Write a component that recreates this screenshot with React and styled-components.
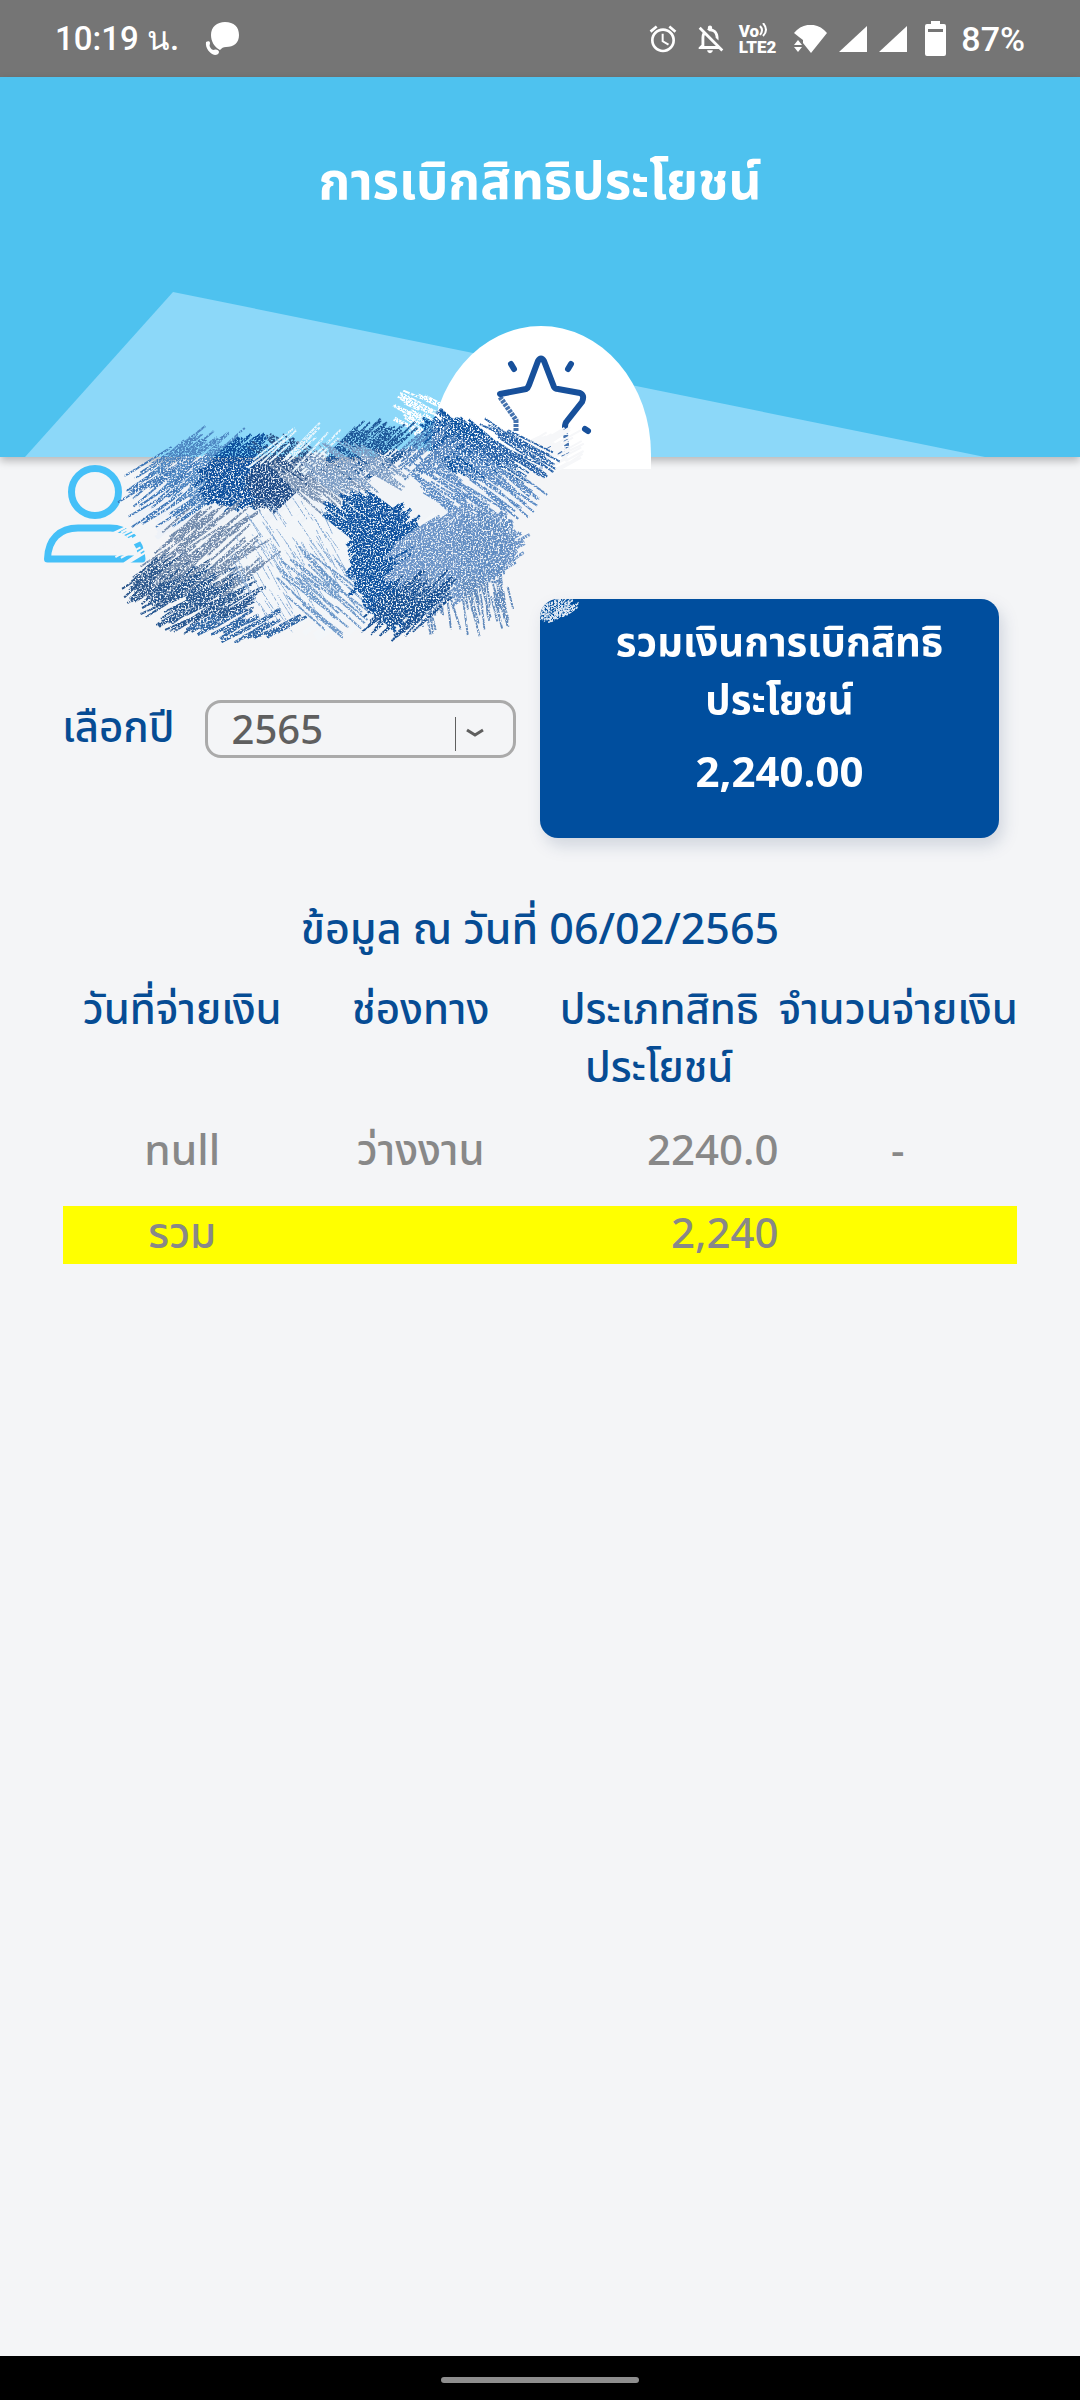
import React, { useState } from "react";
import styled, { createGlobalStyle, ThemeProvider } from "styled-components";
import { MdAlarm, MdOutlineNotificationsOff } from "react-icons/md";

const theme = {
  color: {
    page: "#f4f5f7",
    sky: "#4ec2ef",
    skyLight: "#8cd8f9",
    icon: "#45c0f8",
    blue: "#064c94",
    card: "#004e9e",
    gray: "#888888",
    border: "#aaaaaa",
    yellow: "#ffff00",
  },
  font: {
    text: `"Noto Sans Thai", "Noto Sans", sans-serif`,
    input: `"Noto Sans", sans-serif`,
    status: `Roboto, "Noto Sans", sans-serif`,
  },
};

const GlobalStyle = createGlobalStyle`
  * {
    box-sizing: border-box;
  }
  body {
    margin: 0;
    background: #f4f5f7;
  }
`;
const Screen = styled.div`
  display: flex;
  flex-direction: column;
  min-height: 100vh;
  background: ${({ theme }) => theme.color.page};
  font-family: ${({ theme }) => theme.font.text};
  font-size: 42px;
  line-height: 58px;
  font-weight: 500;
`;

/* status bar */
const StatusBar = styled.div`
  display: flex;
  align-items: center;
  justify-content: space-between;
  height: 77px;
  padding: 0 55px;
  background: #757575;
  color: #fff;
  font-family: ${({ theme }) => theme.font.status};
  font-size: 34px;
  line-height: 40px;
`;
const Clock = styled.span`
  font-size: 33px;
`;
const StatusGroup = styled.div`
  display: flex;
  align-items: center;
  gap: ${({ $gap }) => $gap}px;
  svg {
    display: block;
    fill: currentColor;
  }
`;
const Volte = styled.div`
  font-size: 17px;
  line-height: 16px;
  font-weight: 900;
`;
const VolteTop = styled.div`
  display: flex;
  svg {
    fill: none;
    stroke: currentColor;
    stroke-width: 2;
  }
`;

/* header */
const Header = styled.header`
  position: relative;
  height: 380px;
  background: ${({ theme }) => theme.color.sky};
  box-shadow: 0 4px 8px rgba(0, 0, 0, 0.25);
`;
const Title = styled.h1`
  margin: 0;
  padding-top: 75px;
  color: #fff;
  font-size: 51px;
  line-height: 64px;
  font-weight: 700;
  text-align: center;
`;
const Beam = styled.svg`
  position: absolute;
  left: 0;
  bottom: 0;
  width: 100%;
  height: 165px;
  fill: ${({ theme }) => theme.color.skyLight};
`;
const Badge = styled.div`
  position: absolute;
  left: 50%;
  bottom: -12px;
  width: 220px;
  height: 143px;
  margin-left: -109px;
  border-radius: 110px 110px 0 0 / 128px 128px 0 0;
  background: #fff;
  svg {
    display: block;
  }
`;

/* profile */
const Profile = styled.section`
  position: relative;
  height: 142px;
  padding: 8px 0 0 44px;
`;
const ScribbleArt = styled.svg`
  position: absolute;
  left: ${({ $left }) => $left}px;
  top: ${({ $top }) => $top}px;
  pointer-events: none;
`;

/* year and total */
const Summary = styled.section`
  display: grid;
  grid-template-columns: 1fr 1fr;
`;
const YearField = styled.div`
  display: flex;
  align-items: center;
  gap: 30px;
  padding: 20px 24px 0 62px;
`;
const YearLabel = styled.label`
  color: ${({ theme }) => theme.color.blue};
  white-space: nowrap;
`;
const SelectBox = styled.div`
  position: relative;
  flex: 1;
  svg {
    position: absolute;
    right: 32px;
    top: 16px;
    pointer-events: none;
  }
`;
const YearSelect = styled.select`
  display: block;
  appearance: none;
  width: 100%;
  height: 58px;
  padding: 0 0 0 24px;
  border: 3px solid ${({ theme }) => theme.color.border};
  border-radius: 16px;
  background: transparent;
  color: #5f5f5f;
  font-family: ${({ theme }) => theme.font.input};
  font-size: 40px;
  font-weight: 500;
  line-height: 52px;
  outline: none;
`;
const TotalCard = styled.div`
  position: relative;
  overflow: hidden;
  width: 85%;
  height: 239px;
  padding: 16px 0 0 20px;
  border-radius: 18px;
  background: ${({ theme }) => theme.color.card};
  color: #fff;
  font-weight: 700;
  text-align: center;
`;
const CardShadow = styled.div`
  filter: drop-shadow(4px 8px 8px rgba(0, 30, 80, 0.14));
`;
const TotalTitle = styled.h2`
  margin: 0 0 14px;
  font-size: 40px;
  line-height: 58px;
`;

/* table */
const Benefits = styled.section`
  flex: 1;
  padding: 64px 63px 0;
`;
const AsOf = styled.p`
  margin: 0 0 22px;
  color: ${({ theme }) => theme.color.blue};
  font-size: 43px;
  text-align: center;
`;
const Table = styled.table`
  width: 100%;
  table-layout: fixed;
  border-collapse: collapse;
  color: ${({ theme }) => theme.color.gray};
  th,
  td {
    padding: 0;
    font-weight: 500;
    text-align: center;
    vertical-align: top;
    white-space: nowrap;
  }
  thead {
    color: ${({ theme }) => theme.color.blue};
  }
  tbody td {
    padding: 25px 0;
  }
  td:nth-child(3) {
    text-align: right;
  }
`;
const SumRow = styled.tr`
  background: ${({ theme }) => theme.color.yellow};
`;

const NavBar = styled.nav`
  display: flex;
  justify-content: center;
  align-items: center;
  height: 44px;
  padding-top: 4px;
  background: #000;
`;
const Handle = styled.span`
  width: 198px;
  height: 6px;
  border-radius: 3px;
  background: #8e8e8e;
`;

/* small seeded generator, so the strokes stay put between renders */
const random = seed => () => {
  seed = (seed * 1664525 + 1013904223) % 4294967296;
  return seed / 4294967296;
};

// x, y: centre, w, h: spread, a: stroke angle, n: count, l: length, s: width
const basePatches = [
  { x: 185, y: 495, w: 70, h: 56, a: -38, n: 90, l: 46, s: 4, c: "#eef2f8" },
  { x: 290, y: 500, w: 190, h: 60, a: -38, n: 300, l: 50, s: 5, c: "#eff3f8" },
  { x: 425, y: 495, w: 150, h: 70, a: 34, n: 260, l: 50, s: 5, c: "#f1f4f8" },
  { x: 320, y: 570, w: 300, h: 110, a: -38, n: 260, l: 50, s: 5, c: "#f3f6f9" },
  { x: 548, y: 452, w: 60, h: 36, a: -30, n: 60, l: 30, s: 2, c: "#f6f7f9" },
  { x: 130, y: 540, w: 40, h: 40, a: -30, n: 30, l: 22, s: 2, c: "#f4f5f7" },
];
const inkPatches = [
  { x: 425, y: 416, w: 46, h: 50, a: 28, n: 60, l: 26, s: 2, c: "#ffffff" },
  { x: 175, y: 485, w: 80, h: 70, a: -36, n: 60, l: 48, s: 2, c: "#3f78b8" },
  { x: 205, y: 462, w: 80, h: 46, a: -42, n: 45, l: 50, s: 2, c: "#4d86c2" },
  { x: 242, y: 472, w: 70, h: 54, a: -40, n: 170, l: 38, s: 3, c: "#0d509d" },
  { x: 230, y: 488, w: 46, h: 36, a: 38, n: 50, l: 30, s: 3, c: "#0d509d" },
  { x: 280, y: 476, w: 46, h: 50, a: -42, n: 170, l: 34, s: 3, c: "#1d4a86" },
  { x: 292, y: 460, w: 60, h: 34, a: 35, n: 50, l: 38, s: 2, c: "#2a5288" },
  { x: 318, y: 478, w: 60, h: 50, a: 38, n: 40, l: 44, s: 2, c: "#7a93b4" },
  { x: 300, y: 450, w: 90, h: 20, a: -42, n: 14, l: 46, s: 2, c: "#e8f6fd" },
  { x: 372, y: 448, w: 70, h: 36, a: -40, n: 70, l: 48, s: 2, c: "#1f5798" },
  { x: 350, y: 470, w: 90, h: 40, a: 36, n: 40, l: 44, s: 2, c: "#7b9cc4" },
  { x: 462, y: 446, w: 56, h: 44, a: 40, n: 160, l: 42, s: 3, c: "#0c52a0" },
  { x: 508, y: 452, w: 60, h: 36, a: 30, n: 50, l: 54, s: 2, c: "#2561a8" },
  { x: 430, y: 452, w: 50, h: 40, a: -40, n: 40, l: 40, s: 2, c: "#5484bd" },
  { x: 475, y: 486, w: 110, h: 56, a: 36, n: 70, l: 48, s: 2, c: "#5a8ac4" },
  { x: 165, y: 578, w: 56, h: 36, a: -38, n: 70, l: 44, s: 2, c: "#2b568c" },
  { x: 200, y: 600, w: 90, h: 48, a: -30, n: 100, l: 46, s: 2, c: "#265690" },
  { x: 215, y: 548, w: 110, h: 80, a: -38, n: 70, l: 48, s: 2, c: "#7089ab" },
  { x: 245, y: 625, w: 100, h: 20, a: -28, n: 30, l: 34, s: 3, c: "#2f66a6" },
  { x: 290, y: 565, w: 110, h: 120, a: 60, n: 90, l: 26, s: 1, c: "#86aad4" },
  { x: 325, y: 595, w: 80, h: 60, a: 42, n: 36, l: 50, s: 2, c: "#6d98c9" },
  { x: 385, y: 552, w: 56, h: 80, a: -42, n: 170, l: 42, s: 3, c: "#08509f" },
  { x: 368, y: 520, w: 60, h: 40, a: 38, n: 60, l: 44, s: 3, c: "#0b519f" },
  { x: 388, y: 590, w: 46, h: 60, a: 42, n: 120, l: 40, s: 3, c: "#0b519f" },
  { x: 455, y: 555, w: 100, h: 76, a: -32, n: 260, l: 52, s: 3, c: "#6a93c7" },
  { x: 485, y: 542, w: 60, h: 60, a: 84, n: 60, l: 34, s: 2, c: "#5f8bc1" },
  { x: 460, y: 602, w: 110, h: 36, a: 78, n: 50, l: 36, s: 2, c: "#6089bb" },
  { x: 408, y: 606, w: 60, h: 36, a: -44, n: 50, l: 54, s: 2, c: "#174f93" },
];

const cornerPatches = [
  { x: 12, y: 8, w: 44, h: 22, a: -38, n: 60, l: 18, s: 2, c: "#dfe8f3" },
];

const strokesOf = ({ x, y, w, h, a, n, l, s, c }, seed) => {
  const next = random(seed * 7919 + 13);
  let d = "";
  for (let i = 0; i < n; i++) {
    const turn = next() * Math.PI * 2;
    const far = Math.sqrt(next());
    const cx = x + (Math.cos(turn) * far * w) / 2;
    const cy = y + (Math.sin(turn) * far * h) / 2;
    const angle = ((a + (next() - 0.5) * 12) * Math.PI) / 180;
    const half = (l * (0.6 + next() * 0.6)) / 2;
    const dx = Math.cos(angle) * half;
    const dy = Math.sin(angle) * half;
    d += `M${(cx - dx).toFixed(1)} ${(cy - dy).toFixed(1)}L${(cx + dx).toFixed(1)} ${(cy + dy).toFixed(1)}`;
  }
  return <path key={c + seed} d={d} stroke={c} strokeWidth={s} fill="none" />;
};

const Scribble = ({ id, base = [], ink, left, top, viewBox, width, height }) => (
  <ScribbleArt
    $left={left}
    $top={top}
    width={width}
    height={height}
    viewBox={viewBox}
    aria-hidden="true"
  >
    <filter id={id} x="0" y="0" width="100%" height="100%">
      <feTurbulence type="fractalNoise" baseFrequency="0.6" numOctaves="2" seed="4" />
      <feColorMatrix values="0 0 0 0 0  0 0 0 0 0  0 0 0 0 0  0 0 0 5 -1.6" />
      <feComposite in="SourceGraphic" operator="in" />
    </filter>
    <g>{base.map((part, i) => strokesOf(part, i + 50))}</g>
    <g filter={`url(#${id})`}>{ink.map((part, i) => strokesOf(part, i + 1))}</g>
  </ScribbleArt>
);

const ChatIcon = () => (
  <svg width="34" height="34" viewBox="0 0 34 34">
    <path d="M20 0c9 0 14 5 14 13s-5 12-13 12c-3 0-4 1-6 3-6-3-9-9-9-15C6 5 12 0 20 0z" />
    <path d="M1 20c2-1 4-1 4 1 0 2-1 2 0 4 1 2 2 3 4 3 2-1 5 0 5 2s-2 3-4 3C5 32 0 26 1 20z" />
  </svg>
);

const WifiIcon = () => (
  <svg width="33" height="28" viewBox="0 0 33 28">
    <path d="M0 8C9-3 24-3 33 8L17 28 9 18V15L5 12z" />
    <path d="M4 15l4 5H0zM0 22h8l-4 5z" />
  </svg>
);

const SignalIcon = () => (
  <svg width="28" height="26" viewBox="0 0 28 26">
    <path d="M28 0V26H0z" />
  </svg>
);

const BatteryIcon = () => (
  <svg width="21" height="35" viewBox="0 0 21 35">
    <path
      fillRule="evenodd"
      d="M6 0h9v3h4q2 0 2 2v28q0 2-2 2H2q-2 0-2-2V5q0-2 2-2h4zM3 8v3h15V8z"
    />
  </svg>
);

const StarIcon = () => (
  <svg
    width="220"
    height="150"
    viewBox="431 326 220 150"
    fill="none"
    stroke="#17509b"
    strokeWidth="6"
    strokeLinecap="round"
    strokeLinejoin="round"
  >
    <path d="M500 394 526 389Q528 388 529 385L538 361Q541 356 544 361L554 387Q555 389 558 389L580 393Q585 395 582 402L567 421Q565 423 565 427" />
    <path
      d="M500 397 516 420 516 432M565 427L567 450Q567 456 562 454L541 442"
      strokeWidth="5"
      strokeDasharray="3 1"
      strokeLinecap="butt"
      opacity="0.8"
    />
    <path d="M511 364l3 5M571 364l-3 5M585 429l3 2" />
    <path d="M541 465v8" opacity="0.3" strokeWidth="4" />
  </svg>
);

const PersonIcon = () => (
  <svg width="102" height="98" viewBox="0 0 102 98" fill="none" stroke="#45c0f8" strokeWidth="7">
    <circle cx="51" cy="27" r="23.500" />
    <path d="M3.500 94C4 74 16 63 34 63H66C84 63 97 76 98 94z" strokeLinejoin="round" />
  </svg>
);

const rows = [{ date: "null", channel: "ว่างงาน", type: "2240.0", amount: "-" }];

const BenefitScreen = () => {
  const [year, setYear] = useState("2565");

  return (
    <Screen>
      <StatusBar>
        <StatusGroup $gap={26}>
          <Clock>10:19 น.</Clock>
          <ChatIcon />
        </StatusGroup>
        <StatusGroup $gap={18}>
          <StatusGroup $gap={12}>
            <StatusGroup $gap={14}>
              <MdAlarm size={32} />
              <MdOutlineNotificationsOff size={34} />
            </StatusGroup>
            <Volte>
              <VolteTop>
                Vo
                <svg width="10" height="14" viewBox="0 0 10 14">
                  <path d="M1 3q4 4 0 9M4 0q6 7 0 13" />
                </svg>
              </VolteTop>
              LTE2
            </Volte>
          </StatusGroup>
          <StatusGroup $gap={12}>
            <WifiIcon />
            <SignalIcon />
            <SignalIcon />
          </StatusGroup>
          <StatusGroup $gap={15}>
            <BatteryIcon />
            <span>87%</span>
          </StatusGroup>
        </StatusGroup>
      </StatusBar>

      <Header>
        <Beam viewBox="0 0 1080 165" preserveAspectRatio="none">
          <path d="M25 165 173 0 985 165z" />
        </Beam>
        <Title>การเบิกสิทธิประโยชน์</Title>
        <Badge>
          <StarIcon />
        </Badge>
      </Header>

      <Profile>
        <PersonIcon />
        <Scribble
          id="grain"
          base={basePatches}
          ink={inkPatches}
          left={100}
          top={-87}
          width={520}
          height={290}
          viewBox="100 370 520 290"
        />
      </Profile>

      <Summary>
        <YearField>
          <YearLabel htmlFor="year">เลือกปี</YearLabel>
          <SelectBox>
            <YearSelect id="year" value={year} onChange={e => setYear(e.target.value)}>
              <option value="2565">2565</option>
              <option value="2564">2564</option>
            </YearSelect>
            <svg width="30" height="36" viewBox="0 0 30 36" fill="none" stroke="#5f5f5f">
              <path d="M1.500 1V35" />
              <path d="M13 14l8 5 8-5" strokeWidth="3" />
            </svg>
          </SelectBox>
        </YearField>
        <CardShadow>
          <TotalCard>
            <TotalTitle>
              รวมเงินการเบิกสิทธิ
              <br />
              ประโยชน์
            </TotalTitle>
            <div>2,240.00</div>
            <Scribble
              id="corner-grain"
              ink={cornerPatches}
              left={0}
              top={0}
              width={50}
              height={40}
              viewBox="0 0 50 40"
            />
          </TotalCard>
        </CardShadow>
      </Summary>

      <Benefits>
        <AsOf>ข้อมูล ณ วันที่ 06/02/2565</AsOf>
        <Table>
          <thead>
            <tr>
              <th>วันที่จ่ายเงิน</th>
              <th>ช่องทาง</th>
              <th>
                ประเภทสิทธิ
                <br />
                ประโยชน์
              </th>
              <th>จำนวนจ่ายเงิน</th>
            </tr>
          </thead>
          <tbody>
            {rows.map(row => (
              <tr key={row.channel}>
                <td>{row.date}</td>
                <td>{row.channel}</td>
                <td>{row.type}</td>
                <td>{row.amount}</td>
              </tr>
            ))}
          </tbody>
          <tfoot>
            <SumRow>
              <td>รวม</td>
              <td />
              <td>2,240</td>
              <td />
            </SumRow>
          </tfoot>
        </Table>
      </Benefits>

      <NavBar>
        <Handle />
      </NavBar>
    </Screen>
  );
};

const App = () => (
  <ThemeProvider theme={theme}>
    <GlobalStyle />
    <BenefitScreen />
  </ThemeProvider>
);

export default App;
